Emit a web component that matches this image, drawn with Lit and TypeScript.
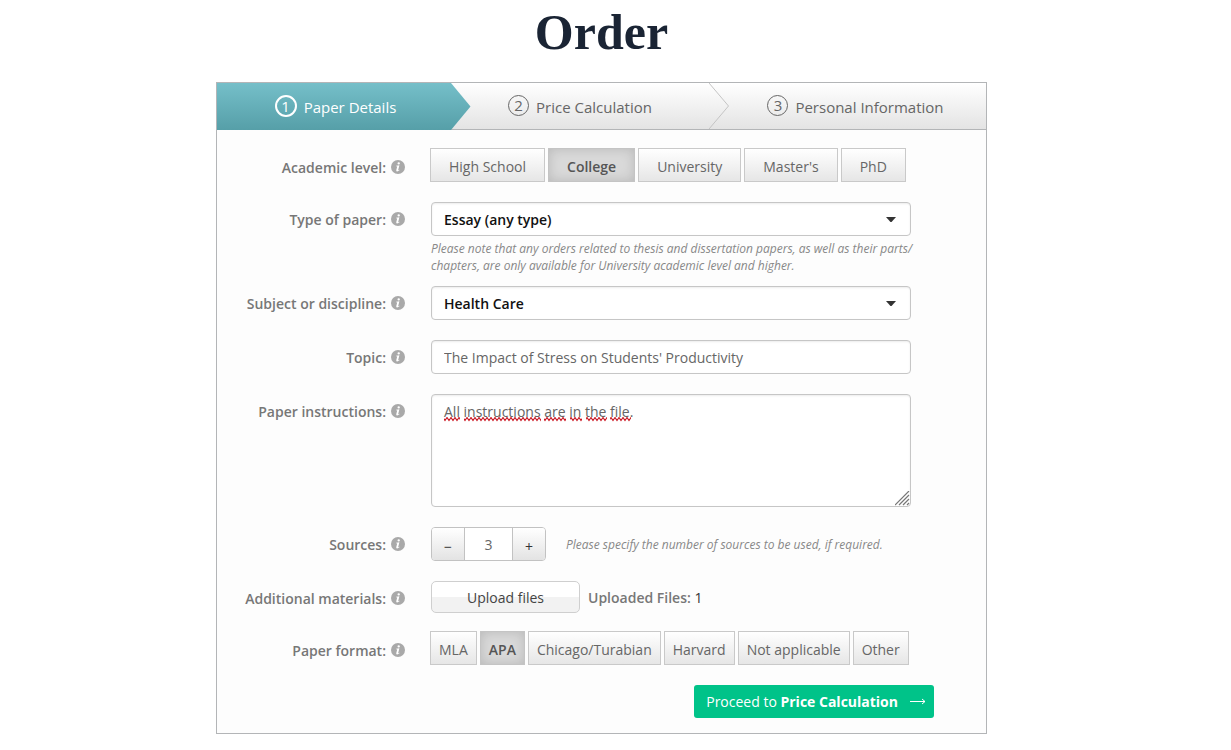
import { LitElement, html, css, svg } from "lit";
import { customElement, property, state } from "lit/decorators.js";
import { classMap } from "lit/directives/class-map.js";

@customElement("info-icon")
class InfoIcon extends LitElement {
  static styles = css`
    :host {
      display: block;
      width: 14px;
      height: 14px;
    }
    svg {
      display: block;
    }
  `;

  render() {
    return html`<svg width="14" height="14" viewBox="0 0 14 14" aria-hidden="true">
      <circle cx="7" cy="7" r="7" fill="#a9a9a9"></circle>
      <ellipse cx="7.7" cy="3.4" rx="1.2" ry="1.1" fill="#fff"></ellipse>
      <path d="M5.1 5.7 L8.4 5.3 L7.2 9.9 Q7.1 10.5 8.5 9.7 L8.7 10.1 Q7.2 11.5 5.9 11.4 Q5 11.2 5.3 10.1 L6.2 6.6 Q6.3 6.1 5 6.2 Z" fill="#fff"></path>
    </svg>`;
  }
}

@customElement("toggle-group")
class ToggleGroup extends LitElement {
  @property({ attribute: false }) options: string[] = [];
  @property() value = "";
  @property() label = "";
  @property({ type: Boolean }) compact = false;

  static styles = css`
    :host {
      display: block;
    }
    .group {
      display: flex;
      gap: 3px;
      margin-left: -1px;
    }
    .option {
      box-sizing: border-box;
      height: 34px;
      padding: 3px 18px 0;
      border: 1px solid #c9c9c9;
      background: linear-gradient(#ffffff, #e6e6e6);
      color: #666;
      font: 14px "Open Sans", sans-serif;
      white-space: nowrap;
      cursor: pointer;
    }
    .compact .option {
      padding: 3px 8px 0;
    }
    .option.selected {
      border-color: #c4c4c4;
      background: #d9d9d9;
      box-shadow: inset 0 0 12px rgba(0, 0, 0, 0.15);
      color: #555;
      font-weight: 600;
    }
  `;

  private choose(option: string) {
    this.value = option;
  }

  render() {
    return html`<div class=${classMap({ group: true, compact: this.compact })} role="group" aria-label=${this.label}>
      ${this.options.map(
        (o) => html`<button
          type="button"
          class=${classMap({ option: true, selected: o === this.value })}
          aria-pressed=${o === this.value ? "true" : "false"}
          @click=${() => this.choose(o)}
        >${o}</button>`
      )}
    </div>`;
  }
}

const LEVELS = ["High School", "College", "University", "Master's", "PhD"];
const FORMATS = ["MLA", "APA", "Chicago/Turabian", "Harvard", "Not applicable", "Other"];

/* Start and width of each flagged word, measured from the text's left edge. */
const FLAGGED = [
  [0, 16],
  [20, 77],
  [100, 22],
  [126, 12],
  [142, 21],
  [166, 21],
];

@customElement("app-root")
class AppRoot extends LitElement {
  @state() private sources = 3;

  static styles = css`
    :host {
      display: block;
      box-sizing: border-box;
      padding: 0 28px 16px 0;
      background: #fff;
      color: #777;
      font: 14px "Open Sans", sans-serif;
    }
    .title {
      margin: 0 0 18px;
      color: #1a2434;
      font: bold 50px/64px "Liberation Serif", serif;
      text-align: center;
    }
    .card {
      box-sizing: border-box;
      max-width: 771px;
      margin: 0 auto;
      border: 1px solid #b3b5b7;
      background: #fdfdfd;
    }
    .steps {
      display: grid;
      grid-template-columns: 234fr 258fr 277fr;
      height: 47px;
      margin: 0;
      padding: 0;
      list-style: none;
      background: linear-gradient(#ffffff, #e3e3e3);
      box-shadow: inset 0 -1px #b3b5b7;
    }
    .step {
      position: relative;
      display: flex;
    }
    .step.active {
      padding-left: 3px;
      background: linear-gradient(#75bfc9, #569fa8);
    }
    .step.last {
      padding-left: 16px;
    }
    .step-link {
      flex: 1;
      display: flex;
      align-items: center;
      justify-content: center;
      gap: 7px;
      color: #666;
      font-size: 15px;
      text-decoration: none;
    }
    .active .step-link {
      color: #fff;
    }
    .number {
      box-sizing: border-box;
      width: 21px;
      height: 21px;
      margin-bottom: 3px;
      border: 1px solid #666;
      border-radius: 50%;
      line-height: 18px;
      text-align: center;
    }
    .active .number {
      width: 22px;
      height: 22px;
      margin-bottom: 2px;
      border: 2px solid #fff;
    }
    .chevron {
      position: absolute;
      z-index: 1;
      left: 100%;
      top: 0;
    }
    .form {
      display: grid;
      gap: 20px;
      padding: 18px 52px 15px 0;
    }
    .row {
      display: grid;
      grid-template-columns: 188px minmax(0, 480px);
      column-gap: 26px;
    }
    .label {
      display: flex;
      justify-content: flex-end;
      align-items: center;
      gap: 5px;
      height: 34px;
      color: #777;
      font-weight: 600;
      white-space: nowrap;
    }
    .label-text {
      padding-top: 1px;
    }
    .low {
      padding-top: 4px;
      height: 30px;
    }
    .noted {
      margin-bottom: -8px;
    }
    .select-box {
      position: relative;
    }
    .caret {
      position: absolute;
      right: 15px;
      top: 15px;
      pointer-events: none;
    }
    .field {
      display: block;
      box-sizing: border-box;
      width: 100%;
      height: 34px;
      margin: 0;
      padding: 1px 12px 0;
      border: 1px solid #c6c6c6;
      border-radius: 4px;
      outline: none;
      appearance: none;
      background: #fff;
      box-shadow: inset 0 1px 2px rgba(0, 0, 0, 0.08);
      color: #666;
      font: 14px "Open Sans", sans-serif;
    }
    .select {
      color: #111;
      font-weight: 600;
    }
    .area-box {
      position: relative;
    }
    .area {
      height: 113px;
      padding: 7px 12px;
      line-height: 19px;
      resize: none;
    }
    .squiggles {
      position: absolute;
      left: 13px;
      top: 23px;
      pointer-events: none;
    }
    .grip {
      position: absolute;
      right: 1px;
      bottom: 1px;
      pointer-events: none;
    }
    .note {
      margin: 4px -8px 0 0;
      color: #888;
      font-size: 12px;
      font-style: italic;
      line-height: 17px;
    }
    .inline {
      display: flex;
      align-items: center;
      gap: 20px;
    }
    .inline .note {
      margin: 0;
    }
    .stepper {
      display: flex;
      box-sizing: border-box;
      height: 34px;
      border: 1px solid #c2c2c2;
      border-radius: 4px;
      overflow: hidden;
    }
    .step-button {
      width: 32px;
      padding: 4px 0 0;
      border: 0;
      background: linear-gradient(#ffffff, #e3e3e3);
      color: #333;
      font: 14px "Open Sans", sans-serif;
    }
    .count {
      box-sizing: border-box;
      width: 49px;
      padding: 1px 0 0;
      border: solid #c2c2c2;
      border-width: 0 1px;
      border-radius: 0;
      outline: none;
      background: #fff;
      color: #666;
      font: 14px "Open Sans", sans-serif;
      text-align: center;
    }
    .tight {
      margin-bottom: -4px;
    }
    .materials {
      gap: 8px;
      height: 32px;
    }
    .upload {
      width: 149px;
      height: 32px;
      padding: 0;
      border: 1px solid #cfcfcf;
      border-radius: 5px;
      background: linear-gradient(#ffffff 50%, #f2f2f2 50%);
      color: #444;
      font: 14px "Open Sans", sans-serif;
    }
    .uploaded {
      font-weight: 600;
    }
    .uploaded-count {
      color: #333;
      font-weight: 400;
    }
    .actions {
      display: flex;
      justify-content: flex-end;
    }
    .proceed {
      display: flex;
      align-items: center;
      gap: 12px;
      height: 33px;
      padding: 0 8px 0 12px;
      border: 0;
      border-radius: 3px;
      background: #00c389;
      color: #fff;
      font: 14px "Open Sans", sans-serif;
    }
    .arrow {
      margin-bottom: 2px;
    }
  `;

  private label(text: string, target: string, low = false) {
    return html`<label class=${classMap({ label: true, low })} for=${target}>
      <span class="label-text">${text}</span><info-icon></info-icon>
    </label>`;
  }

  private select(id: string, value: string) {
    return html`<div class="select-box">
      <select class="field select" id=${id}>
        <option selected>${value}</option>
      </select>
      <svg class="caret" width="10" height="6" viewBox="0 0 10 6" aria-hidden="true">
        <path d="M0 0H10L6 4.6Q5 5.6 4 4.6Z" fill="#333"></path>
      </svg>
    </div>`;
  }

  private setSources(n: number) {
    this.sources = Math.max(0, n);
  }

  render() {
    return html`
      <h1 class="title">Order</h1>
      <main class="card">
        <ol class="steps">
          <li class="step active">
            <a class="step-link" href="#details" aria-current="step"><span class="number">1</span><span>Paper Details</span></a>
            <svg class="chevron" width="20" height="47" viewBox="0 0 20 47" aria-hidden="true">
              <defs>
                <linearGradient id="teal" x1="0" y1="0" x2="0" y2="1">
                  <stop offset="0" stop-color="#75bfc9"></stop>
                  <stop offset="1" stop-color="#569fa8"></stop>
                </linearGradient>
              </defs>
              <path d="M0 0L19.5 23.5L0 47Z" fill="url(#teal)"></path>
            </svg>
          </li>
          <li class="step">
            <a class="step-link" href="#price"><span class="number">2</span><span>Price Calculation</span></a>
            <svg class="chevron" width="20" height="46" viewBox="0 0 20 46" aria-hidden="true">
              <path d="M0 0L19.5 23L0 46" fill="none" stroke="#c4c4c4"></path>
            </svg>
          </li>
          <li class="step last">
            <a class="step-link" href="#personal"><span class="number">3</span><span>Personal Information</span></a>
          </li>
        </ol>
        <form class="form" @submit=${(e: Event) => e.preventDefault()}>
          <div class="row">
            ${this.label("Academic level:", "level", true)}
            <toggle-group id="level" label="Academic level" .options=${LEVELS} value="College"></toggle-group>
          </div>
          <div class="row noted">
            ${this.label("Type of paper:", "type")}
            <div>
              ${this.select("type", "Essay (any type)")}
              <p class="note">Please note that any orders related to thesis and dissertation papers, as well as their parts/<wbr>chapters, are only available for University academic level and higher.</p>
            </div>
          </div>
          <div class="row">
            ${this.label("Subject or discipline:", "subject")}
            ${this.select("subject", "Health Care")}
          </div>
          <div class="row">
            ${this.label("Topic:", "topic")}
            <input class="field" id="topic" type="text" value="The Impact of Stress on Students' Productivity" />
          </div>
          <div class="row">
            ${this.label("Paper instructions:", "instructions")}
            <div class="area-box">
              <textarea class="field area" id="instructions" spellcheck="false" .value=${"All instructions are in the file."}></textarea>
              <svg class="squiggles" width="190" height="5" viewBox="0 0 190 5" aria-hidden="true">
                <defs>
                  <pattern id="wave" width="4" height="5" patternUnits="userSpaceOnUse">
                    <path d="M-1 0.5L1 3.5L3 0.5L5 3.5" fill="none" stroke="#c8101c" stroke-width="1.1"></path>
                  </pattern>
                </defs>
                ${FLAGGED.map(([x, w]) => svg`<rect x=${x} y="0" width=${w} height="5" fill="url(#wave)"></rect>`)}
              </svg>
              <svg class="grip" width="15" height="15" viewBox="0 0 15 15" aria-hidden="true">
                <path d="M0 14L14 0M4 14L14 4M8 14L14 8M12 14L14 12" fill="none" stroke="#777" stroke-width="1.2"></path>
              </svg>
            </div>
          </div>
          <div class="row">
            ${this.label("Sources:", "sources")}
            <div class="inline">
              <div class="stepper">
                <button class="step-button" type="button" aria-label="Fewer sources" @click=${() => this.setSources(this.sources - 1)}>−</button>
                <input class="count" id="sources" type="text" inputmode="numeric" .value=${String(this.sources)} />
                <button class="step-button" type="button" aria-label="More sources" @click=${() => this.setSources(this.sources + 1)}>+</button>
              </div>
              <p class="note">Please specify the number of sources to be used, if required.</p>
            </div>
          </div>
          <div class="row tight">
            ${this.label("Additional materials:", "upload")}
            <div class="inline materials">
              <button class="upload" id="upload" type="button">Upload files</button>
              <span class="uploaded">Uploaded Files: <span class="uploaded-count">1</span></span>
            </div>
          </div>
          <div class="row">
            ${this.label("Paper format:", "format", true)}
            <toggle-group id="format" label="Paper format" compact .options=${FORMATS} value="APA"></toggle-group>
          </div>
          <div class="actions">
            <button class="proceed" type="submit">
              <span>Proceed to <b>Price Calculation</b></span>
              <svg class="arrow" width="16" height="8" viewBox="0 0 16 8" aria-hidden="true">
                <path d="M0 4.5H15M12 2L15 4.5L12 7" fill="none" stroke="#fff"></path>
              </svg>
            </button>
          </div>
        </form>
      </main>
    `;
  }
}
